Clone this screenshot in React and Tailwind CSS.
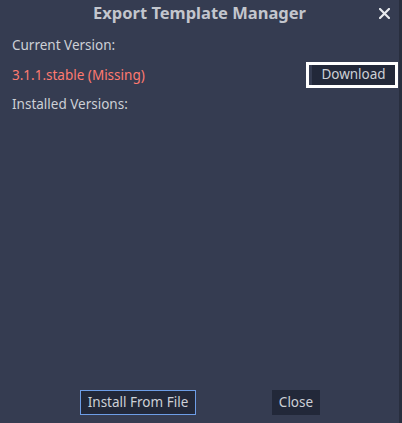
import React from 'react';

const font = { fontFamily: '"Noto Sans", "Open Sans", sans-serif' };

const App = () => {
  return (
    <div className="flex h-[423px] w-[402px] bg-[#353c51] text-[#cdd0d6]" style={font}>
      <div className="flex flex-1 flex-col">
        {/* Title bar */}
        <div className="flex h-[26px] items-center">
          <div className="w-[30px]" />
          <div className="flex-1 text-center text-[16.5px] font-bold leading-none text-[#c3c6cd]">
            Export Template Manager
          </div>
          <button className="flex w-[30px] items-center justify-start pl-[10px]">
            <svg width="11" height="11" viewBox="0 0 11 11">
              <path d="M1 1 L10 10 M10 1 L1 10" stroke="#e8eaee" strokeWidth="2.2" strokeLinecap="square" />
            </svg>
          </button>
        </div>

        {/* Content */}
        <div className="mt-[9px] flex flex-1 flex-col pl-3 pr-[1px]">
          <div className="h-[20px] text-[13.5px] leading-[20px]">Current Version:</div>
          <div className="mt-[7px] flex h-[26px] items-center justify-between">
            <span className="text-[13.5px] leading-[20px] text-[#ff7a70]">3.1.1.stable (Missing)</span>
            <div className="flex h-[26px] w-[92px] border-[3px] border-white pl-[3px]">
              <button className="flex h-full flex-1 items-center justify-center bg-[#222839] text-[13.5px] leading-none text-[#cdd0d6]">
                Download
              </button>
            </div>
          </div>
          <div className="mt-[6px] h-[20px] text-[13.5px] leading-[20px]">Installed Versions:</div>
          <div className="flex-1" />
        </div>

        {/* Bottom buttons */}
        <div className="flex h-[25px] mb-[8px] items-stretch pl-[80px]">
          <button className="flex w-[116px] items-center justify-center border border-[#6d9de6] bg-[#222839] text-[13.5px] leading-none text-[#cdd0d6]">
            Install From File
          </button>
          <button className="ml-[76px] flex w-[48px] items-center justify-center bg-[#222839] text-[13.5px] leading-none text-[#cdd0d6]">
            Close
          </button>
        </div>
      </div>
      <div className="w-[3px] bg-[#282e3e]" />
    </div>
  );
};

export default App;
